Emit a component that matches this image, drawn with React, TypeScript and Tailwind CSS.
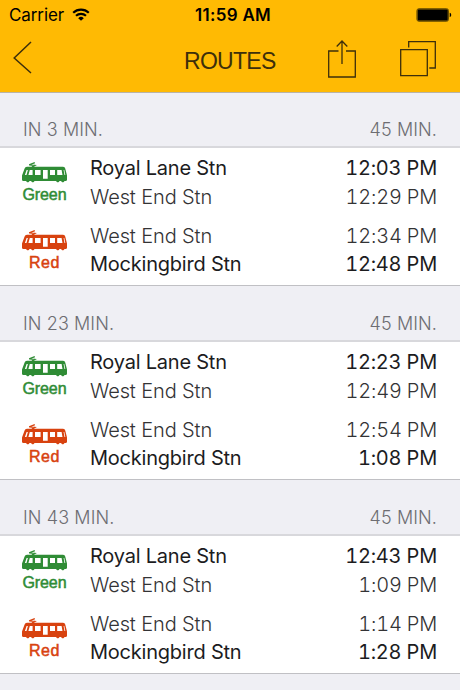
import clsx from "clsx";

type Stop = { name: string; time: string; main: boolean };
type Leg = { line: "Green" | "Red"; stops: Stop[] };
type Route = { departs: string; duration: string; legs: Leg[] };

function makeRoute(departs: string, times: string[]): Route {
  return {
    departs,
    duration: "45 MIN.",
    legs: [
      {
        line: "Green",
        stops: [
          { name: "Royal Lane Stn", time: times[0], main: true },
          { name: "West End Stn", time: times[1], main: false },
        ],
      },
      {
        line: "Red",
        stops: [
          { name: "West End Stn", time: times[2], main: false },
          { name: "Mockingbird Stn", time: times[3], main: true },
        ],
      },
    ],
  };
}

const ROUTES: Route[] = [
  makeRoute("IN 3 MIN.", ["12:03 PM", "12:29 PM", "12:34 PM", "12:48 PM"]),
  makeRoute("IN 23 MIN.", ["12:23 PM", "12:49 PM", "12:54 PM", "1:08 PM"]),
  makeRoute("IN 43 MIN.", ["12:43 PM", "1:09 PM", "1:14 PM", "1:28 PM"]),
];

function TramIcon() {
  return (
    <svg width="45" height="21" viewBox="0 0 45 21" className="block">
      <path d="M12.800.7 7.200 2.900 12.800 3.400 10 5.200" fill="none" stroke="currentColor" strokeWidth="1.400" />
      <path
        fill="currentColor"
        fillRule="evenodd"
        d="M5 4.800h36c1.300 0 2 .8 2.300 2L45 13.500V17.600c0 .8-.4 1.400-1 1.400h-1.500c-.7 1.800-2.700 1.800-3.400 0h-1.600c-.7 1.800-2.700 1.800-3.400 0H12.500c-.7 1.800-2.700 1.800-3.400 0H7.500c-.7 1.800-2.700 1.800-3.400 0H1c-.6 0-1-.6-1-1.400V13.500l2.500-6.700c.5-1.300 1.200-2 2.500-2ZM4.600 8 2.900 13h1.600L5.900 8ZM7.800 8 6.400 13h4.200V8ZM13 8v5h5.600V8ZM21 8v8.800h4.700V8ZM28 8v5h5V8ZM35.200 8v5h5.300L39.600 8ZM41.600 8l.9 5h.8l-1-5Z"
      />
    </svg>
  );
}

function StatusBar() {
  return (
    <div className="grid h-[31px] grid-cols-3 items-center pl-[9px] pr-2 text-[17px] text-black">
      <div className="flex items-center gap-[8px]">
        <span className="tracking-[-0.1px]">Carrier</span>
        <svg width="18" height="14" viewBox="0 0 18 14" className="-mt-px">
          <path d="M1.200 4.700a11.500 11.500 0 0 1 15.600 0M4 7.800a7.500 7.500 0 0 1 10 0" fill="none" stroke="#000" strokeWidth="2.200" />
          <path d="M9 12.800 6.200 10.200a4 4 0 0 1 5.600 0Z" />
        </svg>
      </div>
      <span className="whitespace-nowrap pl-[5px] text-center font-semibold tracking-[0.3px]">11:59 AM</span>
      <svg width="36" height="14" viewBox="0 0 36 14" className="-mt-px justify-self-end">
        <rect x=".9" y=".7" width="31.600" height="12.600" rx="2" fill="#a87b02" stroke="#6b5000" />
        <rect x="1.700" y="1.500" width="30" height="11" rx="1" />
        <path d="M33.700 4.800c2 .6 2 3.800 0 4.400Z" />
      </svg>
    </div>
  );
}

function NavBar() {
  return (
    <div className="flex h-[61px] items-start pl-[13px] pr-6 text-[#3d2f0b]">
      <button aria-label="Back" className="mt-[10px]">
        <svg width="19" height="33" viewBox="0 0 19 33" fill="none" stroke="currentColor" strokeWidth="1.500" className="block">
          <path d="M18 1 1.200 17 18 32" />
        </svg>
      </button>
      <h1 className="ml-[152px] mt-[12px] w-[100px] font-['Liberation_Sans',sans-serif] text-[23px] leading-9 tracking-[-0.7px]">
        ROUTES
      </h1>
      <button aria-label="Share" className="ml-[44px] mt-[9px]">
        <svg width="28" height="38" viewBox="0 0 28 38" fill="none" stroke="currentColor" strokeWidth="1.300" className="block">
          <path d="M10.500 11H.7v26h26.600V11H18M14 24V1M8.700 6.500 14 1l5.300 5.500" />
        </svg>
      </button>
      <button aria-label="Windows" className="ml-[44px] mt-[10px]">
        <svg width="36" height="36" viewBox="0 0 36 36" fill="none" stroke="currentColor" strokeWidth="1.300" className="block">
          <path d="M.7 8.600h26.600v26H.7ZM8.700 6.500V.7h26.600V27h-6" />
        </svg>
      </button>
    </div>
  );
}

function LegRow({ leg }: { leg: Leg }) {
  const green = leg.line === "Green";
  return (
    <div className="flex h-[67.5px]">
      <div
        className={clsx(
          "flex w-[45px] flex-col items-center pt-[14px]",
          green ? "tracking-[-0.1px] text-[#2f8c35]" : "tracking-[0.5px] text-[#d8420f]",
        )}
      >
        <TramIcon />
        <span className="mt-[3px] font-['Liberation_Sans',sans-serif] text-[16px] leading-[18px] [-webkit-text-stroke:0.5px_currentColor]">
          {leg.line}
        </span>
      </div>
      <div className="ml-[23px] flex-1 pt-[6px] text-[20px] leading-[28.5px]">
        {leg.stops.map((stop) => (
          <div
            key={stop.name}
            className={clsx(
              "flex justify-between",
              stop.main ? "font-[370] text-[#1c1c1e]" : "font-light text-[#333335]",
            )}
          >
            <span className={stop.main ? "tracking-[-0.22px]" : "tracking-[-0.12px]"}>{stop.name}</span>
            <span className="tabular-nums tracking-[-0.2px]">{stop.time}</span>
          </div>
        ))}
      </div>
    </div>
  );
}

function RouteSection({ route }: { route: Route }) {
  return (
    <section className="h-[194px]">
      <div className="flex h-[56px] items-end justify-between border-b-2 border-[#d8d8dc] px-[23px] pb-[4px] text-[18px] font-light leading-6 tracking-[0.1px] text-[#6d6d72]">
        <span>{route.departs}</span>
        <span>{route.duration}</span>
      </div>
      <div className="h-[138px] border-b border-[#c0c0c4] bg-white pl-[22px] pr-[23px]">
        {route.legs.map((leg) => (
          <LegRow key={leg.line} leg={leg} />
        ))}
      </div>
    </section>
  );
}

export default function App() {
  return (
    <div className="h-[690px] w-[460px] overflow-hidden bg-[#efeff4] font-['Inter',sans-serif]">
      <header className="h-[93px] border-b border-[#b9b3a6] bg-[#ffba03]">
        <StatusBar />
        <NavBar />
      </header>
      <main className="-mt-px">
        {ROUTES.map((route) => (
          <RouteSection key={route.departs} route={route} />
        ))}
      </main>
    </div>
  );
}
